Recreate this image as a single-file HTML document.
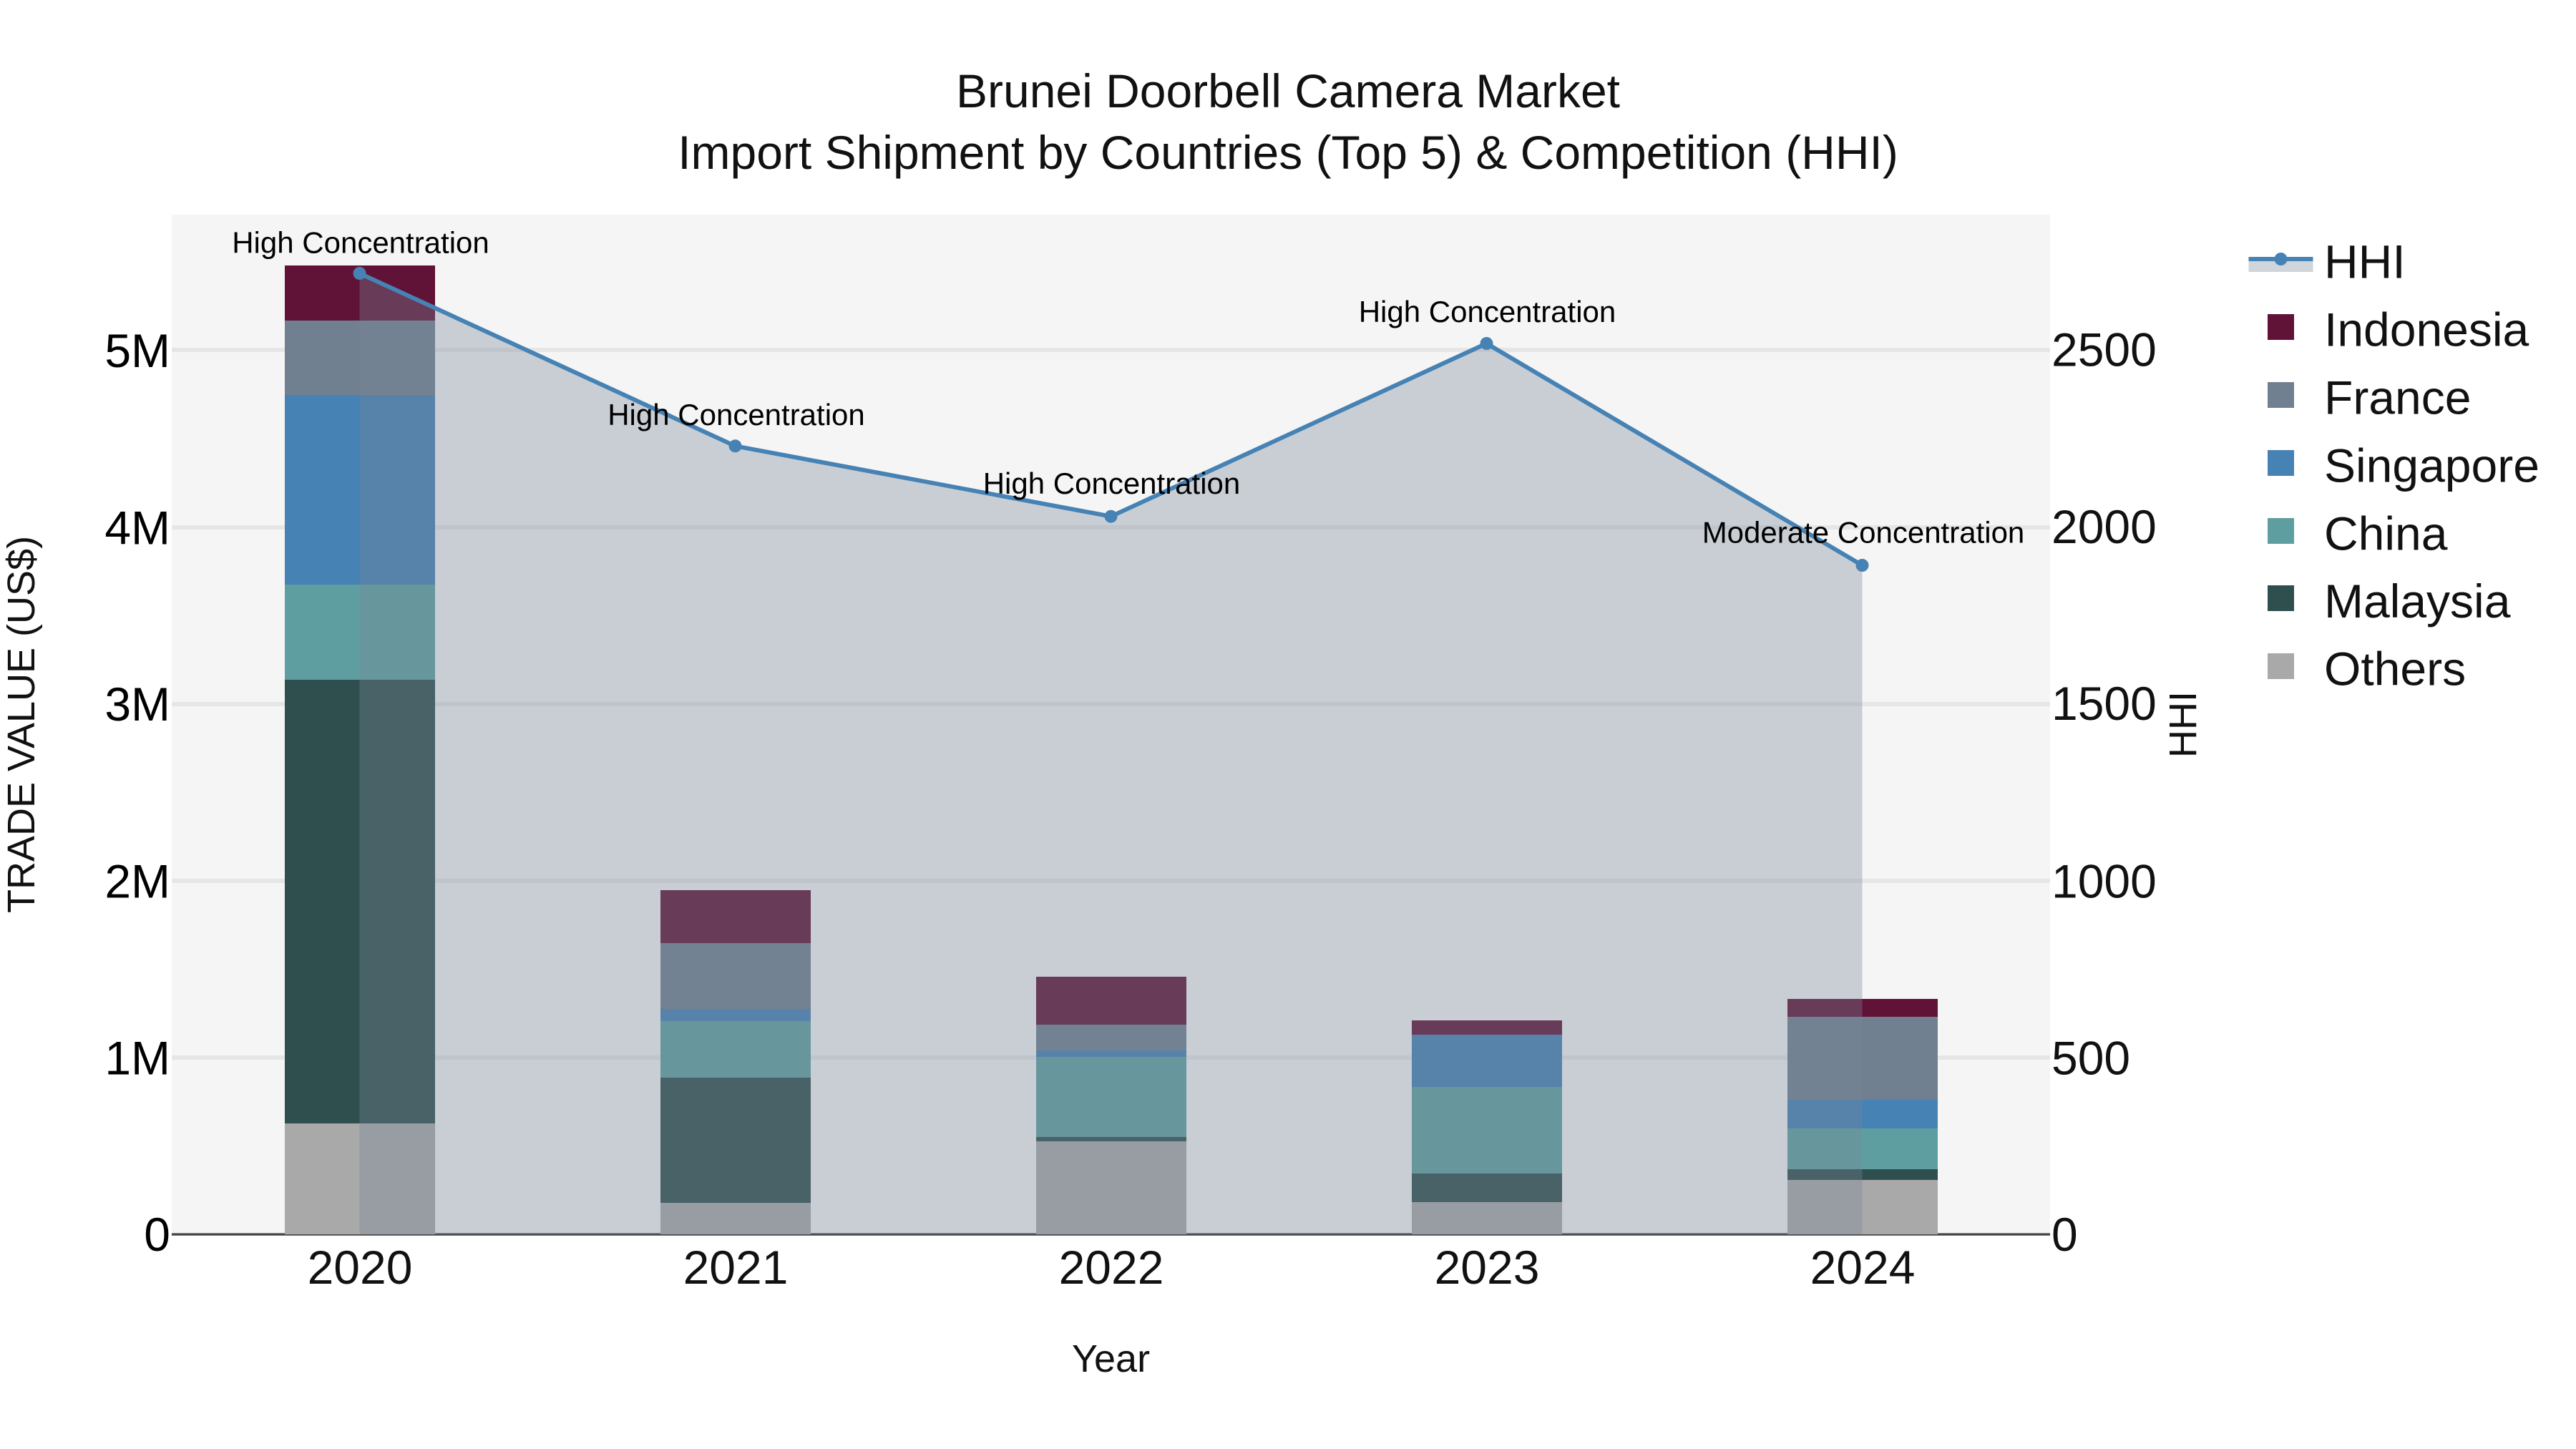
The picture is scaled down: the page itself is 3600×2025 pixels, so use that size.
<!DOCTYPE html>
<html><head><meta charset="utf-8"><title>Brunei Doorbell Camera Market</title>
<style>html,body{margin:0;padding:0;background:#fff;width:3600px;height:2025px;overflow:hidden}
svg{display:block}text{font-family:"Liberation Sans",Arial,sans-serif;white-space:pre}</style></head>
<body>
<svg xmlns="http://www.w3.org/2000/svg" width="3600" height="2025" viewBox="0 0 3600 2025">
<rect width="3600" height="2025" fill="#fff"/>
<rect x="240" y="300" width="2625" height="1425" fill="#f5f5f5"/>
<g fill="#e6e6e6" shape-rendering="crispEdges">
<rect x="240" y="486" width="2625" height="6"/>
<rect x="240" y="734" width="2625" height="6"/>
<rect x="240" y="981" width="2625" height="6"/>
<rect x="240" y="1228" width="2625" height="6"/>
<rect x="240" y="1475" width="2625" height="6"/>
</g>
<rect x="240" y="1723.4" width="2625" height="3.3" fill="#444"/>
<g shape-rendering="crispEdges">
<rect x="398" y="371" width="210" height="77" fill="#601336"/>
<rect x="398" y="448" width="210" height="104" fill="#708090"/>
<rect x="398" y="552" width="210" height="265" fill="#4682b4"/>
<rect x="398" y="817" width="210" height="133" fill="#5f9ea0"/>
<rect x="398" y="950" width="210" height="620" fill="#2f4f4f"/>
<rect x="398" y="1570" width="210" height="155" fill="#a9a9a9"/>

<rect x="923" y="1244" width="210" height="74" fill="#601336"/>
<rect x="923" y="1318" width="210" height="92" fill="#708090"/>
<rect x="923" y="1410" width="210" height="17" fill="#4682b4"/>
<rect x="923" y="1427" width="210" height="79" fill="#5f9ea0"/>
<rect x="923" y="1506" width="210" height="175" fill="#2f4f4f"/>
<rect x="923" y="1681" width="210" height="44" fill="#a9a9a9"/>

<rect x="1448" y="1365" width="210" height="67" fill="#601336"/>
<rect x="1448" y="1432" width="210" height="36" fill="#708090"/>
<rect x="1448" y="1468" width="210" height="9" fill="#4682b4"/>
<rect x="1448" y="1477" width="210" height="112" fill="#5f9ea0"/>
<rect x="1448" y="1589" width="210" height="6" fill="#2f4f4f"/>
<rect x="1448" y="1595" width="210" height="130" fill="#a9a9a9"/>

<rect x="1973" y="1426" width="210" height="20" fill="#601336"/>
<rect x="1973" y="1446" width="210" height="73" fill="#4682b4"/>
<rect x="1973" y="1519" width="210" height="121" fill="#5f9ea0"/>
<rect x="1973" y="1640" width="210" height="40" fill="#2f4f4f"/>
<rect x="1973" y="1680" width="210" height="45" fill="#a9a9a9"/>

<rect x="2498" y="1396" width="210" height="25" fill="#601336"/>
<rect x="2498" y="1421" width="210" height="116" fill="#708090"/>
<rect x="2498" y="1537" width="210" height="40" fill="#4682b4"/>
<rect x="2498" y="1577" width="210" height="57" fill="#5f9ea0"/>
<rect x="2498" y="1634" width="210" height="15" fill="#2f4f4f"/>
<rect x="2498" y="1649" width="210" height="76" fill="#a9a9a9"/>
</g>
<polygon points="502.5,382 1027.5,623.3 1552.5,721.7 2077.5,480 2602.5,790 2602.5,1725 502.5,1725" fill="rgba(119,136,153,0.35)"/>
<polyline points="502.5,382 1027.5,623.3 1552.5,721.7 2077.5,480 2602.5,790" fill="none" stroke="#4682b4" stroke-width="6" stroke-linejoin="round"/>
<g fill="#4682b4">
<circle cx="502.5" cy="382" r="9"/><circle cx="1027.5" cy="623.3" r="9"/><circle cx="1552.5" cy="721.7" r="9"/><circle cx="2077.5" cy="480" r="9"/><circle cx="2602.5" cy="790" r="9"/>
</g>
<g font-size="42" fill="#000" text-anchor="middle">
<text x="504" y="353.5">High Concentration</text>
<text x="1029" y="594">High Concentration</text>
<text x="1553.5" y="690">High Concentration</text>
<text x="2078.5" y="450">High Concentration</text>
<text x="2604" y="758.7">Moderate Concentration</text>
</g>
<g font-size="66" fill="#111" text-anchor="middle">
<text x="1800" y="150">Brunei Doorbell Camera Market</text>
<text x="1800" y="236">Import Shipment by Countries (Top 5) &amp; Competition (HHI)</text>
<text x="503" y="1794">2020</text>
<text x="1028" y="1794">2021</text>
<text x="1553" y="1794">2022</text>
<text x="2078" y="1794">2023</text>
<text x="2603" y="1794">2024</text>
</g>
<g font-size="66" fill="#000" text-anchor="end">
<text x="238" y="513">5M</text>
<text x="238" y="760.5">4M</text>
<text x="238" y="1007">3M</text>
<text x="238" y="1254.5">2M</text>
<text x="238" y="1501.5">1M</text>
<text x="238" y="1748">0</text>
</g>
<g font-size="66" fill="#111">
<text x="2867" y="511.5">2500</text>
<text x="2867" y="759">2000</text>
<text x="2867" y="1006">1500</text>
<text x="2867" y="1254.5">1000</text>
<text x="2867" y="1501.5">500</text>
<text x="2867" y="1748">0</text>
</g>
<text x="1552.5" y="1917" font-size="54" fill="#111" text-anchor="middle">Year</text>
<text transform="translate(48 1012.5) rotate(-90)" font-size="54" fill="#111" text-anchor="middle">TRADE VALUE (US$)</text>
<text transform="translate(3069 1012.5) rotate(-90)" font-size="54" fill="#111" text-anchor="middle">HHI</text>
<rect x="3142.5" y="362" width="90" height="18" fill="#cfd5db"/>
<rect x="3142.5" y="359" width="90" height="6" fill="#4682b4"/>
<circle cx="3187.5" cy="362" r="9" fill="#4682b4"/>
<g shape-rendering="crispEdges">
<rect x="3169" y="439" width="37" height="36" fill="#601336"/>
<rect x="3169" y="534" width="37" height="36" fill="#708090"/>
<rect x="3169" y="629" width="37" height="36" fill="#4682b4"/>
<rect x="3169" y="724" width="37" height="36" fill="#5f9ea0"/>
<rect x="3169" y="818" width="37" height="36" fill="#2f4f4f"/>
<rect x="3169" y="913" width="37" height="36" fill="#a9a9a9"/>
</g>
<g font-size="66" fill="#111">
<text x="3248" y="388.5">HHI</text>
<text x="3248" y="483.5">Indonesia</text>
<text x="3248" y="578.5">France</text>
<text x="3248" y="673.5">Singapore</text>
<text x="3248" y="768.5">China</text>
<text x="3248" y="863">Malaysia</text>
<text x="3248" y="957.5">Others</text>
</g>
</svg>
</body></html>
